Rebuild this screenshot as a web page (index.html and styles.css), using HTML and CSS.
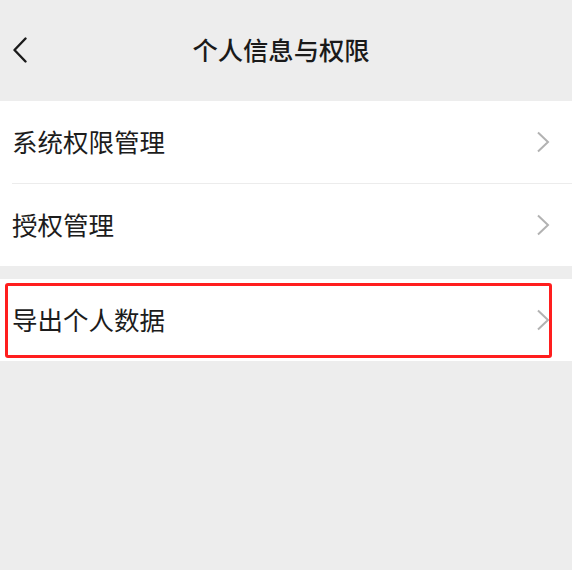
FILE: index.html
```html
<!DOCTYPE html>
<html lang="zh-CN">
<head>
<meta charset="utf-8">
<link rel="stylesheet" href="styles.css">
<title>个人信息与权限</title>
</head>
<body>
<div class="page">
  <header class="nav">
    <span class="back">
      <svg width="16" height="26" viewBox="0 0 16 26"><path d="M13.5 1.5 L2.5 13 L13.5 24.5" fill="none" stroke="#1a1a1a" stroke-width="2.4" stroke-linecap="round" stroke-linejoin="round"/></svg>
    </span>
    <h1 class="title">个人信息与权限</h1>
  </header>
  <section class="group">
    <div class="row row-divided">
      <span class="label">系统权限管理</span>
      <svg class="chev" width="14" height="22" viewBox="0 0 14 22"><path d="M2 1.5 L12 11 L2 20.5" fill="none" stroke="#b2b2b2" stroke-width="2"/></svg>
    </div>
    <div class="row">
      <span class="label">授权管理</span>
      <svg class="chev" width="14" height="22" viewBox="0 0 14 22"><path d="M2 1.5 L12 11 L2 20.5" fill="none" stroke="#b2b2b2" stroke-width="2"/></svg>
    </div>
  </section>
  <section class="group group-second">
    <div class="row row-marked">
      <span class="label">导出个人数据</span>
      <svg class="chev" width="14" height="22" viewBox="0 0 14 22"><path d="M2 1.5 L12 11 L2 20.5" fill="none" stroke="#b2b2b2" stroke-width="2"/></svg>
      <span class="highlight"></span>
    </div>
  </section>
</div>
</body>
</html>
```

FILE: styles.css
```css
html, body {
  margin: 0;
  padding: 0;
  background: #ededed;
}
body {
  font-family: "Noto Sans CJK SC", "Noto Sans", sans-serif;
  color: #1a1a1a;
  width: 572px;
  height: 570px;
  overflow: hidden;
}
.page {
  display: flex;
  flex-direction: column;
}
.nav {
  height: 101px;
  position: relative;
  display: flex;
  align-items: center;
  justify-content: center;
}
.back {
  position: absolute;
  left: 12px;
  top: 37px;
  width: 16px;
  height: 26px;
  display: block;
}
.back svg { display: block; }
.title {
  margin: 0 0 2px -10px;
  font-size: 25.3px;
  font-weight: 500;
  line-height: 1;
  color: #1a1a1a;
}
.group {
  background: #fff;
  display: flex;
  flex-direction: column;
}
.group-second {
  margin-top: 13px;
}
.row {
  height: 82px;
  display: flex;
  align-items: center;
  justify-content: space-between;
  padding: 0 22px 0 12px;
  position: relative;
}
.row-divided::after {
  content: "";
  position: absolute;
  left: 12px;
  right: 0;
  bottom: -1px;
  height: 1px;
  background: #ececec;
}
.row-divided + .row {
  margin-top: 1px;
}
.label {
  font-size: 25.5px;
  line-height: 1;
  color: #1c1c1c;
  margin-top: -2px;
}
.chev { display: block; }
.highlight {
  position: absolute;
  left: 5px;
  top: 4px;
  width: 541px;
  height: 69px;
  border: 3px solid #ff1e1e;
  border-radius: 3px;
  pointer-events: none;
}
```
